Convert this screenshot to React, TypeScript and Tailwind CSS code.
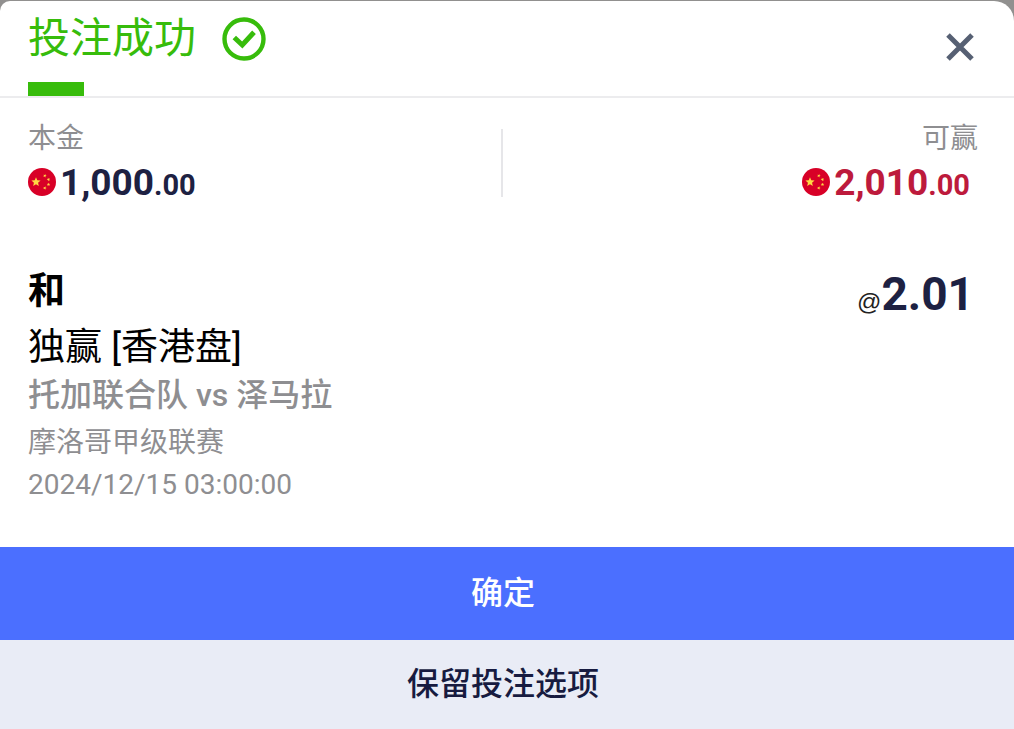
import type { ReactNode } from 'react';

const star = (cx: number, cy: number, r: number, turn = 0) =>
  Array.from({ length: 10 }, (_, i) => {
    const angle = ((i * 36 - 90 + turn) * Math.PI) / 180;
    const radius = i % 2 === 0 ? r : r * 0.45;
    return `${(cx + radius * Math.cos(angle)).toFixed(2)},${(cy + radius * Math.sin(angle)).toFixed(2)}`;
  }).join(' ');

function FlagIcon() {
  return (
    <svg viewBox="0 0 28 28" className="size-7 shrink-0" aria-hidden="true">
      <circle cx="14" cy="14" r="14" fill="#d80027" />
      <g fill="#ffda44">
        <polygon points={star(8, 14, 4.8)} />
        <polygon points={star(16.8, 7.8, 1.8, 20)} />
        <polygon points={star(20.5, 11.5, 1.8, 50)} />
        <polygon points={star(20.5, 16.5, 1.8)} />
        <polygon points={star(16.8, 20, 1.8, 20)} />
      </g>
    </svg>
  );
}

function SuccessIcon() {
  return (
    <svg viewBox="0 0 44 44" fill="none" stroke="#37bc0b" className="size-11 shrink-0" aria-hidden="true">
      <circle cx="22" cy="22" r="19.5" strokeWidth="4.4" />
      <path d="M12.3 20.5 L20.3 28 L32 15.2" strokeWidth="5" />
    </svg>
  );
}

function CloseIcon() {
  return (
    <svg viewBox="0 0 28 28" fill="none" stroke="#566073" strokeWidth="5" className="size-7" aria-hidden="true">
      <path d="M2 2 L26 26 M26 2 L2 26" />
    </svg>
  );
}

function Amount({ whole, cents }: { whole: string; cents: string }) {
  return (
    <div className="flex items-center gap-1">
      <FlagIcon />
      <span className="pt-1 text-[37px] leading-9 font-bold">
        {whole}
        <span className="text-[29px]">.{cents}</span>
      </span>
    </div>
  );
}

function Stat({ label, className, children }: { label: string; className: string; children: ReactNode }) {
  return (
    <div className={className}>
      <div className="text-[28px] leading-9 text-[#8e8e91]">{label}</div>
      {children}
    </div>
  );
}

export default function App() {
  return (
    <div className="flex min-h-screen flex-col bg-[#91908f] pt-px font-[Roboto,'Noto_Sans_CJK_SC',sans-serif]">
      <main className="flex grow flex-col rounded-tl-[10px] rounded-tr-[20px] bg-white">
        <header className="flex items-start justify-between border-b-2 border-[#ececee] px-7">
          <div>
            <div className="flex items-start gap-6 pt-3">
              <h1 className="text-[42px] leading-[52px] text-[#37bc0b]">投注成功</h1>
              <div className="pt-1 pl-0.5">
                <SuccessIcon />
              </div>
            </div>
            <div className="mt-[17px] h-3.5 w-14 bg-[#37bc0b]" />
          </div>
          <button type="button" aria-label="关闭" className="mt-8 mr-3">
            <CloseIcon />
          </button>
        </header>

        <section className="grid grid-cols-2 pt-[23px]">
          <Stat label="本金" className="pl-7 text-[#1d2142]">
            <div className="mt-1">
              <Amount whole="1,000" cents="00" />
            </div>
          </Stat>
          <div className="flex justify-between">
            <div className="mt-2 -ml-1.5 h-[68px] w-0.5 bg-[#e6e6e9]" />
            <Stat label="可赢" className="pr-9 text-right text-[#bd1a3c]">
              <div className="mt-1 pr-2">
                <Amount whole="2,010" cents="00" />
              </div>
            </Stat>
          </div>
        </section>

        <section className="flex items-start justify-between px-7 pt-[61px] pb-[41px]">
          <div>
            <h2 className="text-[37px] leading-[56px] font-bold text-black">和</h2>
            <p className="text-[37px] leading-[56px] text-black">独赢 [香港盘]</p>
            <p className="text-[32px] leading-[38px] font-medium text-[#8e8e91]">托加联合队 vs 泽马拉</p>
            <p className="mt-2 text-[28px] leading-[42px] text-[#8e8e91]">摩洛哥甲级联赛</p>
            <p className="text-[28px] leading-[42px] text-[#8e8e91]">2024/12/15 03:00:00</p>
          </div>
          <div className="flex items-baseline pr-3 text-[#1d2142]">
            <span className="font-['Liberation_Sans',sans-serif] text-2xl text-[#222222]">@</span>
            <span className="text-[46px] leading-[60px] font-bold">2.01</span>
          </div>
        </section>

        <button type="button" className="w-full bg-[#4b6fff] pt-[22px] pr-2 pb-[22px] text-[32px] leading-[49px] font-medium text-white">
          确定
        </button>
        <button type="button" className="w-full grow bg-[#e9ecf6] pt-5 pr-2 pb-5 text-[32px] leading-[49px] font-medium text-[#171b40]">
          保留投注选项
        </button>
      </main>
    </div>
  );
}
